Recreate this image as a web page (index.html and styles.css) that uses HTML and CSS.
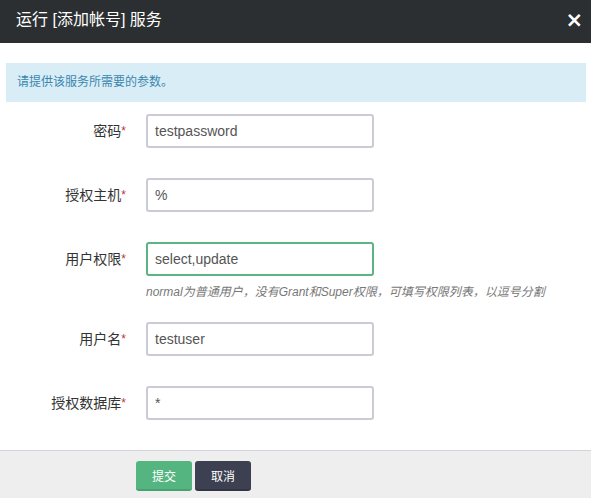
FILE: index.html
```html
<!DOCTYPE html>
<html lang="zh">
<head>
<meta charset="utf-8">
<title>运行 [添加帐号] 服务</title>
<link rel="stylesheet" href="styles.css">
</head>
<body>
<div class="modal">
  <div class="modal-header">
    <h3 class="modal-title">运行 [添加帐号] 服务</h3>
    <span class="close">×</span>
  </div>
  <div class="modal-body">
    <div class="alert">请提供该服务所需要的参数。</div>
    <form class="form">
      <div class="form-group">
        <label class="control-label">密码<span class="req">*</span></label>
        <div class="controls"><input class="input" type="text" value="testpassword"></div>
      </div>
      <div class="form-group">
        <label class="control-label">授权主机<span class="req">*</span></label>
        <div class="controls"><input class="input" type="text" value="%"></div>
      </div>
      <div class="form-group has-help">
        <label class="control-label">用户权限<span class="req">*</span></label>
        <div class="controls">
          <input class="input focused" type="text" value="select,update">
          <p class="help">normal为普通用户，没有Grant和Super权限，可填写权限列表，以逗号分割</p>
        </div>
      </div>
      <div class="form-group">
        <label class="control-label">用户名<span class="req">*</span></label>
        <div class="controls"><input class="input" type="text" value="testuser"></div>
      </div>
      <div class="form-group">
        <label class="control-label">授权数据库<span class="req">*</span></label>
        <div class="controls"><input class="input" type="text" value="*"></div>
      </div>
    </form>
  </div>
  <div class="modal-footer">
    <button class="btn btn-primary" type="button">提交</button>
    <button class="btn btn-dark" type="button">取消</button>
  </div>
</div>
</body>
</html>
```
FILE: styles.css
```css
* { box-sizing: border-box; }
html, body { margin: 0; padding: 0; background: #fff; }
body {
  font-family: "Liberation Sans", "Noto Sans CJK SC", sans-serif;
  color: #333;
  width: 591px;
  height: 498px;
  overflow: hidden;
}
.modal { display: flex; flex-direction: column; height: 498px; }
.modal-header {
  height: 43px;
  background: #2b2f31;
  display: flex;
  align-items: center;
  justify-content: space-between;
  padding: 0 8px 0 16px;
  flex: none;
}
.modal-title {
  margin: 0;
  font-size: 16px;
  font-weight: normal;
  color: #fff;
  line-height: 20px;
  padding-bottom: 4px;
}
.close {
  color: #fff;
  font-size: 21px;
  font-weight: bold;
  line-height: 20px;
  font-family: "DejaVu Sans", sans-serif;
  padding-bottom: 3px;
}
.modal-body { flex: 1; padding: 20px 5px 0 6px; }
.alert {
  background: #d9edf7;
  color: #3a87ad;
  font-size: 12px;
  height: 39px;
  line-height: 39px;
  padding: 0 11px;
}
.form { margin-top: 12px; }
.form-group { display: flex; align-items: flex-start; margin-bottom: 30px; }
.form-group.has-help { margin-bottom: 22px; }
.control-label {
  width: 140px;
  padding-right: 20px;
  text-align: right;
  font-size: 14px;
  line-height: 34px;
  color: #333;
  flex: none;
}
.req { color: #c0392b; font-size: 12px; vertical-align: 1px; }
.controls { flex: 1; }
.input {
  display: block;
  width: 228px;
  height: 34px;
  border: 2px solid #cbcbd6;
  border-radius: 3px;
  padding: 0 7px;
  font-family: "Liberation Sans", "Noto Sans CJK SC", sans-serif;
  font-size: 14px;
  color: #555;
  background: #fff;
  outline: none;
}
.input.focused { border-color: #5cb485; }
.help {
  margin: 8px 0 0;
  font-size: 12px;
  line-height: 16px;
  font-style: italic;
  color: #777;
}
.modal-footer {
  flex: none;
  height: 48px;
  background: #eeeeee;
  border-top: 1px solid #d4d2dc;
  padding: 10px 0 0 136px;
  display: flex;
  align-items: flex-start;
  gap: 3px;
}
.btn {
  width: 56px;
  height: 30px;
  border: none;
  border-radius: 3px;
  color: #fff;
  font-size: 12px;
  font-family: "Liberation Sans", "Noto Sans CJK SC", sans-serif;
  padding: 0;
}
.btn-primary { background: #55b581; border-bottom: 2px solid #47a070; }
.btn-dark { background: #3c4050; border-bottom: 2px solid #323543; }
```
